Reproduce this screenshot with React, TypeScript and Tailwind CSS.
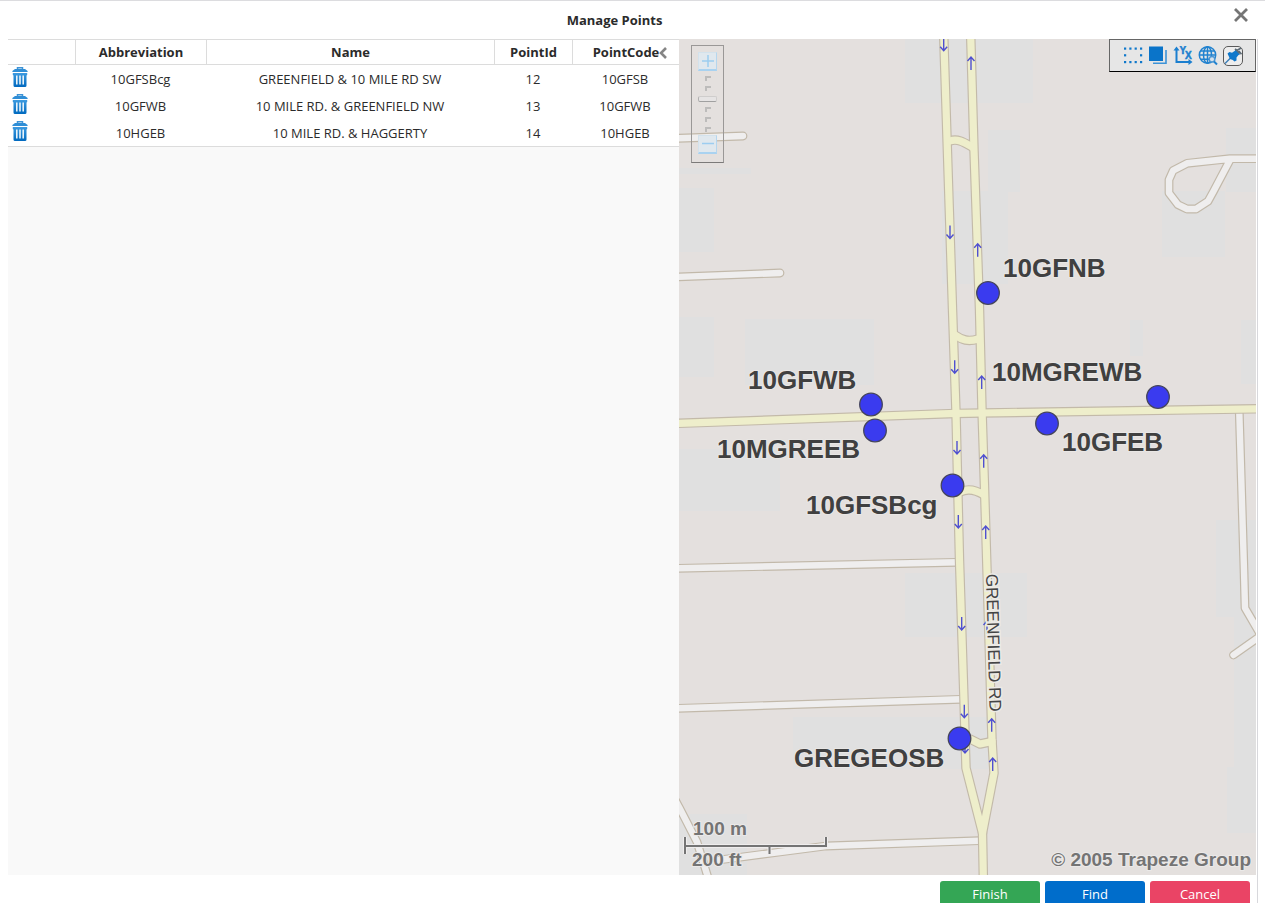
import React from 'react';
import clsx from 'clsx';

interface PointRow {
  abbreviation: string;
  name: string;
  pointId: number;
  pointCode: string;
}

interface Stop {
  label: string;
  cx: number;
  cy: number;
  tx: number;
  ty: number;
}

const rows: PointRow[] = [
  { abbreviation: '10GFSBcg', name: 'GREENFIELD & 10 MILE RD SW', pointId: 12, pointCode: '10GFSB' },
  { abbreviation: '10GFWB', name: '10 MILE RD. & GREENFIELD NW', pointId: 13, pointCode: '10GFWB' },
  { abbreviation: '10HGEB', name: '10 MILE RD. & HAGGERTY', pointId: 14, pointCode: '10HGEB' },
];

const stops: Stop[] = [
  { label: '10GFNB', cx: 309, cy: 254, tx: 324, ty: 238 },
  { label: '10GFWB', cx: 192, cy: 365.5, tx: 69, ty: 349.5 },
  { label: '10MGREEB', cx: 196, cy: 391.5, tx: 38, ty: 419 },
  { label: '10GFSBcg', cx: 273.5, cy: 446.5, tx: 127, ty: 474.5 },
  { label: '10MGREWB', cx: 479, cy: 358, tx: 313, ty: 342 },
  { label: '10GFEB', cx: 368, cy: 384.5, tx: 383, ty: 412 },
  { label: 'GREGEOSB', cx: 280.5, cy: 699.5, tx: 115, ty: 727.5 },
];

const sideStreets = [
  'M-10 99.6 L64 97',
  'M-10 238.3 L101 234',
  'M-10 529.5 L278 523.3',
  'M-10 669.6 L282 660.3',
  'M40 821 L101 813 L147 807 L300 801.7',
  'M-6 757 L0 768 L18 803 L31 845',
  'M590 119.7 L551 119.7 L508 124.3 L494 131.7 L490 140.7 L490 154 L499 165.7 L508 170 L517 170 L529 162.3 L534.5 152.3 L551 121',
  'M560.3 374 L565 531 L566 569 L580 593',
  'M585 594.5 L554.5 616',
];

const mainRoads = [
  'M-10 384.7 L277 374.4 L303 374 L590 369.6',
  'M264.5 -10 L273.5 270 L277 374 L280.5 521 L285 661 L287 729 L303.5 794 L304.5 846',
  'M291.5 -10 L295 111 L300.5 270 L303 371 L305.5 448 L308 531 L313 701 L315 734 L303.5 794',
  'M271 102 C279 99 286 104 293 108',
  'M276 296 C283 301 289 303 299 300',
  'M281 453 C289 449 297 451 305 456',
  'M291 700 L301 705 L313 702.5',
];

const landPatches = [
  [226, 0, 128, 64], [0, 129, 72, 6], [0, 149, 35, 64], [309, 91, 32, 62], [263, 152, 66, 93],
  [0, 278, 35, 60], [66, 280, 129, 66], [0, 410, 36, 62], [36, 410, 65, 62],
  [226, 534, 122, 64], [114, 678, 195, 52], [0, 775, 68, 61],
  [547, 89, 30, 64], [483, 152, 63, 66], [451, 281, 13, 36], [562, 281, 15, 64],
  [537, 481, 40, 97], [555, 578, 22, 150], [548, 728, 29, 66],
];

const southArrows = [[264.7, 5.7], [271, 193.5], [275.7, 328.3], [278, 409], [279.3, 483], [282.7, 585], [285.3, 672.7], [286, 708]];
const northArrows = [[292, 24], [298.7, 210.7], [302.7, 343], [304.7, 421.7], [306.7, 493], [308, 588], [312.7, 685.7], [313.7, 725]];

const TrashIcon: React.FC = () => (
  <svg width="16" height="21" viewBox="0 0 16 21" className="block">
    <defs>
      <linearGradient id="trash" x1="0" y1="0" x2="0" y2="1">
        <stop offset="0" stopColor="#3d9be0" />
        <stop offset="1" stopColor="#0069bf" />
      </linearGradient>
    </defs>
    <path d="M5.5 3 V0.8 H10.5 V3" fill="none" stroke="#3d93d6" strokeWidth="1.5" />
    <path d="M3 2 H13 L15.6 4 V5 H0.4 V4 Z" fill="#2f8ed6" />
    <path d="M0.8 6 H15.2 V8 L14.5 8.5 V18.5 Q14.5 20 13 20 H3 Q1.5 20 1.5 18.5 V8.5 L0.8 8 Z" fill="url(#trash)" />
    <path d="M4.8 8.5 V17.5 M8 8.5 V17.5 M11.2 8.5 V17.5" stroke="#e8f3fb" strokeWidth="1.6" />
  </svg>
);

const SelectAreaIcon: React.FC = () => (
  <svg width="20" height="20" viewBox="0 0 20 20" fill="#0f78cb">
    {[1, 6.3, 11.6, 17].map((x) => (
      <React.Fragment key={x}>
        <rect x={x} y="1.5" width="2.2" height="2.2" />
        <rect x={x} y="15" width="2.2" height="2.2" />
      </React.Fragment>
    ))}
    <rect x="1" y="8.2" width="2.2" height="2.2" />
    <rect x="17" y="8.2" width="2.2" height="2.2" />
  </svg>
);

const LayersIcon: React.FC = () => (
  <svg width="20" height="20" viewBox="0 0 20 20">
    <rect x="1" y="0.5" width="14" height="14.5" fill="#0a74c9" />
    <path d="M18 4 V17.2 H5" fill="none" stroke="#3c93d8" strokeWidth="1.6" />
  </svg>
);

const AxesIcon: React.FC = () => (
  <svg width="20" height="20" viewBox="0 0 20 20">
    <path d="M3.5 3 V16 H17" fill="none" stroke="#1b7fcf" strokeWidth="2" />
    <path d="M0.5 4.5 L3.5 0.5 L6.5 4.5 Z M15.5 13 L19.5 16 L15.5 19 Z" fill="#1b7fcf" />
    <text x="6.5" y="8" className="font-['Liberation_Sans'] text-[10px] font-bold" fill="#1b7fcf" stroke="#1b7fcf" strokeWidth="0.5">Y</text>
    <text x="12" y="13" className="font-['Liberation_Sans'] text-[10px] font-bold" fill="#1b7fcf" stroke="#1b7fcf" strokeWidth="0.5">X</text>
  </svg>
);

const GlobeSearchIcon: React.FC = () => (
  <svg width="20" height="20" viewBox="0 0 20 20" fill="none" stroke="#2182cf" strokeWidth="1.5">
    <circle cx="9.5" cy="9" r="8.2" />
    <ellipse cx="9.5" cy="9" rx="4" ry="8.2" />
    <path d="M9.5 0.8 V17.2 M1.3 9 H17.7 M2.6 5 H16.4 M2.6 13.2 H16.4" />
    <circle cx="14" cy="13.3" r="2.8" fill="#d5e2ec" stroke="#4c97d4" />
    <path d="M16 15.5 L19 18.5" strokeWidth="2" />
  </svg>
);

const PinIcon: React.FC = () => (
  <svg width="20" height="20" viewBox="0 0 20 20">
    <rect x="0.5" y="0.5" width="19" height="19" rx="4.5" fill="#ededed" stroke="#5a5a5a" />
    <path d="M2 17.5 L8 11.5" stroke="#3a7fb8" strokeWidth="1.5" />
    <path d="M4.5 7.5 L6.5 6 L9 6.8 L12 4.8 L12.5 3 L17 8.5 L15.5 9 L13.5 11.5 L13.5 14.5 L11.5 15.5 L9.8 14 L7 13 Z" fill="#0f78cb" />
    <path d="M12 3 L14 4.5 L18 2 M15.8 5 L18.5 8.3 M14 4.5 L16.8 7.5" fill="none" stroke="#5d6b76" strokeWidth="1.7" />
  </svg>
);

const tools = [
  { title: 'Select area', icon: <SelectAreaIcon /> },
  { title: 'Layers', icon: <LayersIcon /> },
  { title: 'Coordinates', icon: <AxesIcon /> },
  { title: 'Search map', icon: <GlobeSearchIcon /> },
  { title: 'Pin toolbar', icon: <PinIcon /> },
];

const MapToolbar: React.FC = () => (
  <div className="absolute top-0 right-0 flex h-[33px] items-center gap-[5px] border border-[#666] border-b-black bg-[#e6e6e6] pr-3 pl-[13px]">
    {tools.map((tool) => (
      <button key={tool.title} type="button" aria-label={tool.title} className="cursor-pointer">
        {tool.icon}
      </button>
    ))}
  </div>
);

const ZoomTick: React.FC = () => <span className="h-[5px] w-[6px] border-t-2 border-l-2 border-[#bdbcbb]" />;

const zoomButton = 'flex h-[19px] w-[19px] items-center justify-center border border-[#d3e2ec] border-r-[#b5d6ee] border-b-2 border-b-[#a9d2f0] bg-[#e0e8ee]';

const ZoomPanel: React.FC = () => (
  <div className="absolute top-1.5 left-3 flex w-[33px] flex-col items-center border border-[#9a9897] border-b-[#7c7a79] pt-1.5 pb-2">
    <button type="button" aria-label="Zoom in" className={zoomButton}>
      <svg width="14" height="14" viewBox="0 0 14 14"><path d="M7 1 V13 M1 7 H13" stroke="#9ccdf0" strokeWidth="1.5" /></svg>
    </button>
    <div className="relative flex h-16 w-5 flex-col items-center gap-[5px] pt-[5px]">
      <ZoomTick />
      <ZoomTick />
      <span className="h-[6px] w-[19px] rounded-xs border border-[#cfcdcc] border-b-[#a0a0a0] border-l-[#b0b0b0] bg-[#e6e4e4]" />
      <ZoomTick />
      <ZoomTick />
      <ZoomTick />
      <input
        type="range"
        aria-label="Zoom level"
        min={0}
        max={5}
        defaultValue={3}
        className="absolute inset-0 h-full w-full opacity-0 [writing-mode:vertical-lr]"
      />
    </div>
    <button type="button" aria-label="Zoom out" className={zoomButton}>
      <svg width="14" height="14" viewBox="0 0 14 14"><path d="M1 6.5 H13" stroke="#9ccdf0" strokeWidth="1.5" /></svg>
    </button>
  </div>
);

const PointsMap: React.FC = () => (
  <svg viewBox="0 0 577 836" preserveAspectRatio="xMidYMid slice" className="absolute inset-0 h-full w-full font-['Liberation_Sans',sans-serif]">
    <rect width="577" height="836" fill="#e4e0de" />
    {landPatches.map(([x, y, w, h], i) => (
      <rect key={i} x={x} y={y} width={w} height={h} fill="#e0e0e0" />
    ))}

    <g fill="none" strokeLinecap="round" strokeLinejoin="round">
      {sideStreets.map((d) => <path key={d} d={d} stroke="#c2b9aa" strokeWidth="8.8" />)}
      {sideStreets.map((d) => <path key={d} d={d} stroke="#efeeee" strokeWidth="6.4" />)}
      {mainRoads.map((d) => <path key={d} d={d} stroke="#c3baa9" strokeWidth="9.5" />)}
      {mainRoads.map((d) => <path key={d} d={d} stroke="#eeeecb" strokeWidth="7.2" />)}
    </g>

    <g fill="none" stroke="#5050d0" strokeWidth="1.4">
      {southArrows.map(([x, y]) => <path key={y} d={`M${x} ${y - 7} V${y + 6} M${x - 3.5} ${y + 2} L${x} ${y + 6} L${x + 3.5} ${y + 2}`} />)}
      {northArrows.map(([x, y]) => <path key={y} d={`M${x} ${y + 7} V${y - 6} M${x - 3.5} ${y - 2} L${x} ${y - 6} L${x + 3.5} ${y - 2}`} />)}
    </g>

    <text
      transform="translate(307 535) rotate(88.5)"
      className="text-[17px]"
      fill="#444"
      stroke="#eceae6"
      strokeWidth="3"
      paintOrder="stroke"
    >
      GREENFIELD RD
    </text>

    {stops.map((stop) => (
      <g key={stop.label}>
        <circle cx={stop.cx} cy={stop.cy} r="11.3" fill="#3a3bef" stroke="#45455c" strokeWidth="1.3" />
        <text x={stop.tx} y={stop.ty} className="text-[26px] font-bold" fill="#404040" stroke="#e9e7e5" strokeWidth="2" paintOrder="stroke">
          {stop.label}
        </text>
      </g>
    ))}

    <path d="M6 798 V815 M6 807 H147 V798 M90.5 807 V815" fill="none" stroke="#efeded" strokeWidth="4" />
    <path d="M6 798 V815 M6 807 H147 V798 M90.5 807 V815" fill="none" stroke="#747474" strokeWidth="2" />
    <g className="text-[19px] font-bold" fill="#747474" stroke="#ebe9e8" strokeWidth="2" paintOrder="stroke">
      <text x="14" y="796">100 m</text>
      <text x="13" y="827">200 ft</text>
      <text x="572" y="827" textAnchor="end">© 2005 Trapeze Group</text>
    </g>
  </svg>
);

const headCell = 'border-y border-r border-[#dcdcdc] p-0 text-center font-bold';
const bodyCell = 'p-0 pr-0.5';

const PointsTable: React.FC = () => (
  <table className="w-full table-fixed border-separate border-spacing-0 border-b border-[#dcdcdc] bg-white text-[13px] leading-4">
    <colgroup>
      <col className="w-[68px]" />
      <col className="w-[131px]" />
      <col />
      <col className="w-[78px]" />
      <col className="w-[106px]" />
    </colgroup>
    <thead>
      <tr className="h-[26px]">
        <th className={headCell} aria-label="Delete" />
        <th className={headCell}>Abbreviation</th>
        <th className={headCell}>Name</th>
        <th className={headCell}>PointId</th>
        <th className="border-y border-[#dcdcdc] p-0 text-center font-bold">PointCode</th>
      </tr>
    </thead>
    <tbody>
      {rows.map((row) => (
        <tr key={row.pointId} className="h-[27px] text-center">
          <td className="p-0 pt-0.5 pl-1 align-top">
            <button type="button" aria-label={`Delete ${row.abbreviation}`} className="block cursor-pointer">
              <TrashIcon />
            </button>
          </td>
          <td className={bodyCell}>{row.abbreviation}</td>
          <td className={bodyCell}>{row.name}</td>
          <td className={bodyCell}>{row.pointId}</td>
          <td className={bodyCell}>{row.pointCode}</td>
        </tr>
      ))}
    </tbody>
  </table>
);

const footerButtons = [
  { label: 'Finish', color: 'bg-[#34a655]' },
  { label: 'Find', color: 'bg-[#006dcb]' },
  { label: 'Cancel', color: 'bg-[#ea4465]' },
];

const App: React.FC = () => {
  return (
    <div className="flex h-screen flex-col overflow-hidden border-t border-[#dcdcdf] bg-white font-['Open_Sans','Noto_Sans',sans-serif] text-[#2b2b2b]">
      <header className="flex h-[38px] shrink-0 items-center">
        <h1 className="flex-1 text-center text-[13px] leading-4 font-bold">Manage Points</h1>
        <button type="button" aria-label="Close" className="mr-3 mb-2.5 flex w-6 cursor-pointer justify-center">
          <svg width="16" height="16" viewBox="0 0 16 16">
            <path d="M2 2 L14 14 M14 2 L2 14" stroke="#757575" strokeWidth="2.8" />
          </svg>
        </button>
      </header>

      <div className="mr-[7px] flex min-h-0 flex-1 flex-col border-r border-[#d8d8dc] pr-px pl-2">
        <main className="flex min-h-0 flex-1">
          <section className="relative flex-[671] bg-[#f9f9f9]">
            <PointsTable />
            <button type="button" aria-label="Collapse list" className="absolute top-2 right-3 cursor-pointer">
              <svg width="8" height="12" viewBox="0 0 8 12" className="block">
                <path d="M7 1 L2 6 L7 11" fill="none" stroke="#858585" strokeWidth="2.6" />
              </svg>
            </button>
          </section>
          <section className="relative flex-[577] overflow-hidden bg-[#e4e0de]">
            <PointsMap />
            <ZoomPanel />
            <MapToolbar />
          </section>
        </main>

        <footer className="flex h-7 shrink-0 justify-end gap-[5px] pt-1.5 pr-1.5">
          {footerButtons.map((button) => (
            <button
              key={button.label}
              type="button"
              className={clsx('h-[26px] w-[100px] cursor-pointer rounded-[3px] text-[13px] leading-4 text-white', button.color)}
            >
              {button.label}
            </button>
          ))}
        </footer>
      </div>
    </div>
  );
};

export default App;
